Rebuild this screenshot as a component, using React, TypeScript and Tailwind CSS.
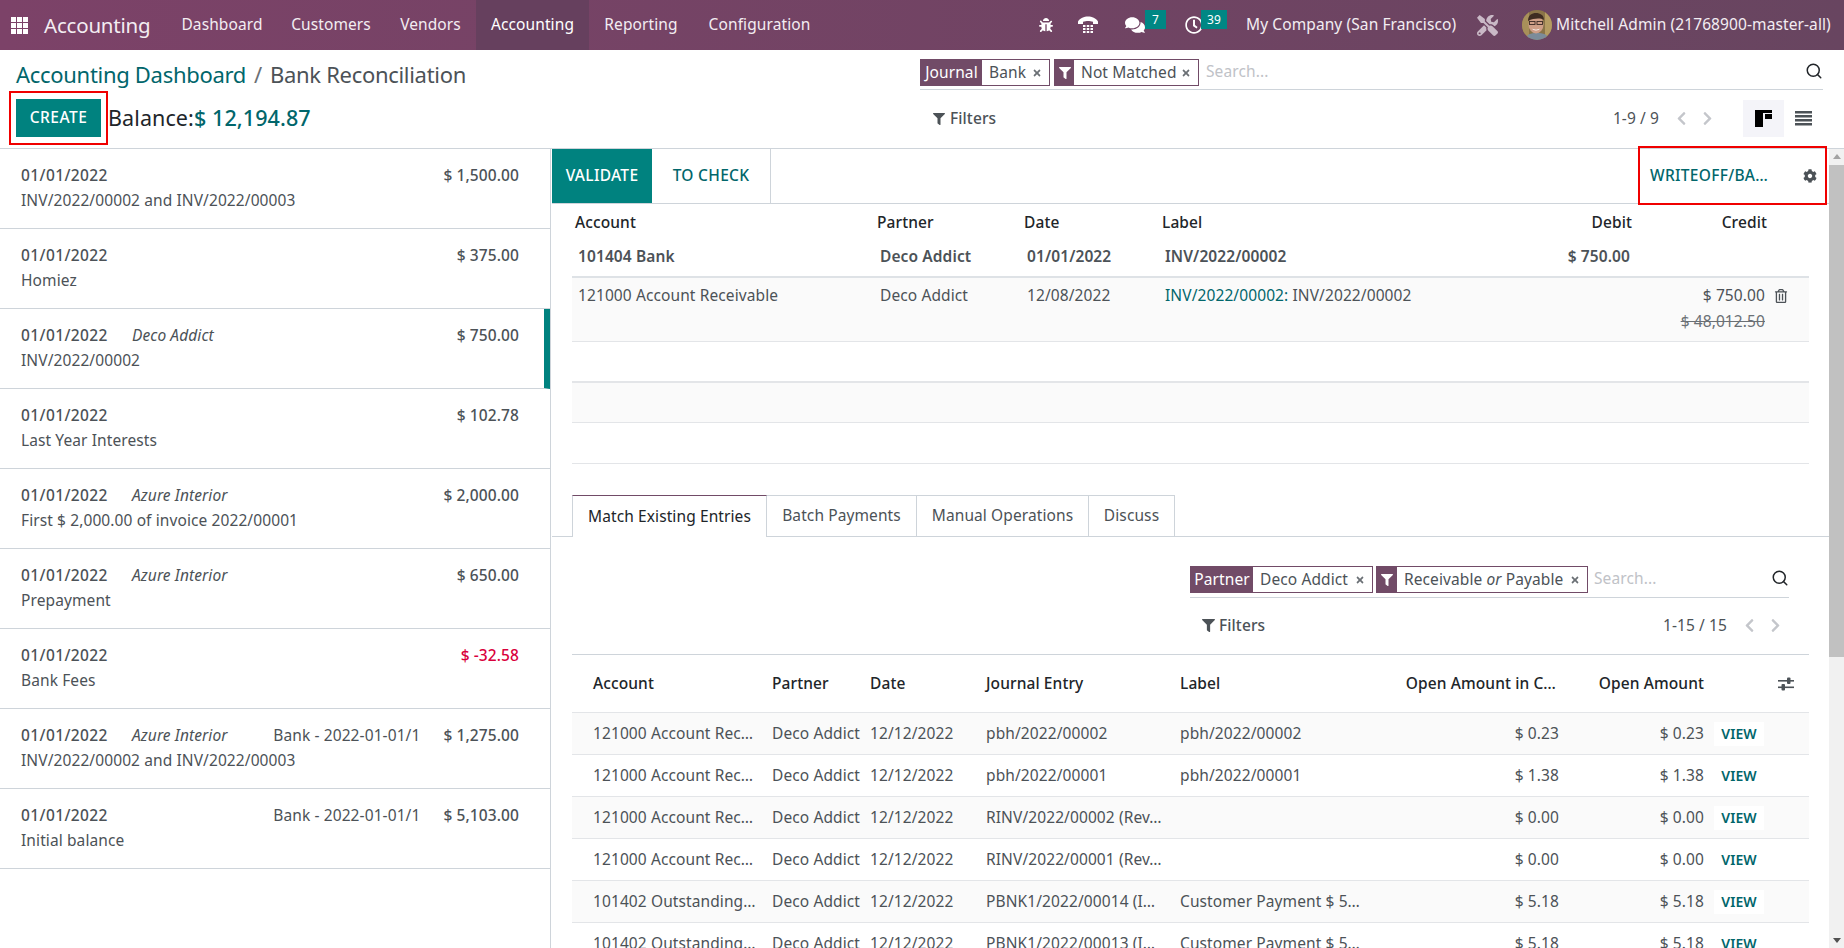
import { FaBug, FaComments, FaRegClock, FaTools, FaFilter, FaCog, FaRegTrashAlt, FaChevronLeft, FaChevronRight, FaTimes } from 'react-icons/fa'
import { FiSearch } from 'react-icons/fi'

const menu = [
  { name: 'Dashboard', width: 'w-[110px]' },
  { name: 'Customers', width: 'w-[108px]' },
  { name: 'Vendors', width: 'w-[91px]' },
  { name: 'Accounting', width: 'w-[113px]' },
  { name: 'Reporting', width: 'w-[104px]' },
  { name: 'Configuration', width: 'w-[133px]' },
]

const statements = [
  { date: '01/01/2022', partner: '', ref: '', amount: '$ 1,500.00', label: 'INV/2022/00002 and INV/2022/00003' },
  { date: '01/01/2022', partner: '', ref: '', amount: '$ 375.00', label: 'Homiez' },
  { date: '01/01/2022', partner: 'Deco Addict', ref: '', amount: '$ 750.00', label: 'INV/2022/00002', active: true },
  { date: '01/01/2022', partner: '', ref: '', amount: '$ 102.78', label: 'Last Year Interests' },
  { date: '01/01/2022', partner: 'Azure Interior', ref: '', amount: '$ 2,000.00', label: 'First $ 2,000.00 of invoice 2022/00001' },
  { date: '01/01/2022', partner: 'Azure Interior', ref: '', amount: '$ 650.00', label: 'Prepayment' },
  { date: '01/01/2022', partner: '', ref: '', amount: '$ -32.58', label: 'Bank Fees', negative: true },
  { date: '01/01/2022', partner: 'Azure Interior', ref: 'Bank - 2022-01-01/1', amount: '$ 1,275.00', label: 'INV/2022/00002 and INV/2022/00003' },
  { date: '01/01/2022', partner: '', ref: 'Bank - 2022-01-01/1', amount: '$ 5,103.00', label: 'Initial balance' },
]

const entries = [
  ['121000 Account Rec…', 'pbh/2022/00002', 'pbh/2022/00002', '$ 0.23'],
  ['121000 Account Rec…', 'pbh/2022/00001', 'pbh/2022/00001', '$ 1.38'],
  ['121000 Account Rec…', 'RINV/2022/00002 (Rev…', '', '$ 0.00'],
  ['121000 Account Rec…', 'RINV/2022/00001 (Rev…', '', '$ 0.00'],
  ['101402 Outstanding…', 'PBNK1/2022/00014 (I…', 'Customer Payment $ 5…', '$ 5.18'],
  ['101402 Outstanding…', 'PBNK1/2022/00013 (I…', 'Customer Payment $ 5…', '$ 5.18'],
]

function Tty() {
  return (
    <svg width="20" height="20" viewBox="0 0 20 20" fill="currentColor">
      <path d="M0 6.500C2 3 6 1.500 10 1.500S18 3 20 6.500V9h-5V6.800C13.500 6.200 11.500 6 10 6s-3.500.2-5 .8V9H0z" />
      <rect x="5" y="10" width="2.500" height="2" /><rect x="8.750" y="10" width="2.500" height="2" /><rect x="12.500" y="10" width="2.500" height="2" />
      <rect x="5" y="13" width="2.500" height="2" /><rect x="8.750" y="13" width="2.500" height="2" /><rect x="12.500" y="13" width="2.500" height="2" />
      <rect x="5" y="16" width="2.500" height="2" /><rect x="8.750" y="16" width="2.500" height="2" /><rect x="12.500" y="16" width="2.500" height="2" />
    </svg>
  )
}

function Avatar() {
  return (
    <svg width="30" height="30" viewBox="0 0 30 30">
      <defs>
        <clipPath id="av"><circle cx="15" cy="15" r="15" /></clipPath>
      </defs>
      <g clipPath="url(#av)">
        <rect width="30" height="30" fill="#8a7448" />
        <rect x="0" y="0" width="7" height="30" fill="#a8905a" />
        <rect x="23" y="0" width="7" height="30" fill="#b59c62" />
        <path d="M3 30c1-6 6-7 12-7s11 1 12 7z" fill="#7c8c9a" />
        <ellipse cx="14" cy="14.500" rx="7.500" ry="9" fill="#cf9f88" />
        <path d="M6 11c0-6 4-8 8-8s8 2 8 7c-3-2-10-2-16 1z" fill="#3e2c22" />
        <rect x="7.500" y="11.500" width="5.500" height="3" fill="none" stroke="#3b2a25" strokeWidth="0.900" />
        <rect x="15" y="11.500" width="5.500" height="3" fill="none" stroke="#3b2a25" strokeWidth="0.900" />
        <path d="M10 18.500c2 1.500 6 1.500 8 0-1 2.500-7 2.500-8 0z" fill="#fff" />
      </g>
    </svg>
  )
}

function Chip({ label, labelWidth, children, className }: { label: React.ReactNode; labelWidth: string; children: React.ReactNode; className: string }) {
  return (
    <div className={`flex h-[27px] border border-[#714b67] bg-white ${className}`}>
      <div className={`flex shrink-0 items-center justify-center bg-[#714b67] text-white ${labelWidth}`}>{label}</div>
      <div className="flex flex-1 items-center justify-between pl-[7px] pr-[7px] whitespace-nowrap text-[#4c5257]">
        <span>{children}</span>
        <FaTimes className="text-[10px] text-[#6b7075]" />
      </div>
    </div>
  )
}

function Pager({ text }: { text: string }) {
  return (
    <div className="flex items-center text-[#4c5257]">
      <span>{text}</span>
      <FaChevronLeft className="ml-[15px] text-[15px] text-[#c4c6cb]" />
      <FaChevronRight className="ml-[11px] text-[15px] text-[#c4c6cb]" />
    </div>
  )
}

export default function App() {
  return (
    <div className="relative flex h-[948px] flex-col overflow-hidden bg-white font-['Noto_Sans',sans-serif] text-[15.5px] tracking-[0.1px] text-[#4c5257]">
      {/* Navbar */}
      <div className="flex h-[50px] shrink-0 items-center bg-[linear-gradient(to_right,#7c4268,#684560)] text-[#f3edf2]">
        <div className="ml-[11px] grid grid-cols-3 gap-[1px]">
          {Array.from({ length: 9 }).map((_, i) => (
            <span key={i} className="h-[5px] w-[5px] bg-white" />
          ))}
        </div>
        <span className="ml-[16px] w-[123px] text-[20.500px] tracking-[-0.2px]">Accounting</span>
        <div className="flex h-full">
          {menu.map((m) => (
            <div key={m.name} className={`flex items-center justify-center whitespace-nowrap ${m.width} ${m.name === 'Accounting' ? 'bg-[#66405e] text-white' : ''}`}>{m.name}</div>
          ))}
        </div>
        <div className="ml-auto flex h-full items-center">
          <FaBug className="text-[14px] text-white" />
          <span className="ml-[25px] text-white"><Tty /></span>
          <div className="relative ml-[27px] text-white">
            <FaComments className="text-[20px]" />
            <span className="absolute left-[20px] top-[-5px] flex h-[19px] w-[21px] items-center justify-center bg-[#008784] text-[12px] text-white">7</span>
          </div>
          <div className="relative ml-[40px] text-white">
            <FaRegClock className="text-[18px]" />
            <span className="absolute left-[16px] top-[-6px] flex h-[19px] w-[26px] items-center justify-center bg-[#008784] text-[12px] text-white">39</span>
          </div>
          <span className="ml-[43px] w-[206px] whitespace-nowrap">My Company (San Francisco)</span>
          <FaTools className="ml-[25px] text-[21px] text-[#c9b9c6]" />
          <span className="ml-[24px]"><Avatar /></span>
          <span className="ml-[4px] mr-[13px] w-[275px] whitespace-nowrap">Mitchell Admin (21768900-master-all)</span>
        </div>
      </div>

      {/* Control panel */}
      <div className="flex h-[99px] shrink-0 border-b border-[#ced4da]">
        <div className="w-[920px] pl-[16px]">
          <div className="pt-[9px] text-[22px] leading-[30px] tracking-[-0.3px]">
            <span className="text-[#01666b]">Accounting Dashboard</span>
            <span className="mx-[8px] text-[#6b7075]">/</span>
            <span className="text-[#4c5257]">Bank Reconciliation</span>
          </div>
          <div className="mt-[10px] flex items-center">
            <div className="flex h-[38px] w-[85px] items-center justify-center bg-[#00827f] font-medium tracking-[0.5px] text-white">CREATE</div>
            <span className="ml-[7px] text-[21.500px] text-[#212529]">Balance:</span>
            <span className="text-[21.500px] font-medium text-[#01666b]">$ 12,194.87</span>
          </div>
        </div>
        <div className="flex-1 pr-[21px]">
          <div className="mt-[9px] flex h-[31px] items-start border-b border-[#ced4da]">
            <Chip label="Journal" labelWidth="w-[61px]" className="w-[130px]">Bank</Chip>
            <Chip label={<FaFilter className="text-[12px]" />} labelWidth="w-[19px]" className="ml-[4px] w-[145px]">Not Matched</Chip>
            <span className="ml-[7px] mt-[1px] text-[#c0c2c7]">Search...</span>
            <FiSearch className="ml-auto mt-[3px] text-[18px] text-[#212529]" />
          </div>
          <div className="mt-[10px] flex h-[37px] items-center">
            <FaFilter className="ml-[13px] text-[12px]" />
            <span className="ml-[5px] font-medium">Filters</span>
            <div className="ml-auto"><Pager text="1-9 / 9" /></div>
            <div className="ml-[28px] flex h-[37px] w-[41px] items-center justify-center bg-[#f4f4f9]">
              <svg width="17" height="17" viewBox="0 0 17 17">
                <path d="M0 0h17v3H8v14H0z" fill="#000" />
                <rect x="10" y="4" width="7" height="5" fill="#000" />
              </svg>
            </div>
            <svg className="ml-[11px] mr-[11px]" width="17" height="15" viewBox="0 0 17 15" fill="#4c5257">
              <rect width="17" height="2.500" /><rect y="4" width="17" height="2.500" /><rect y="8" width="17" height="2.500" /><rect y="12" width="17" height="2.500" />
            </svg>
          </div>
        </div>
      </div>

      <div className="flex min-h-0 flex-1">
        {/* Statement lines */}
        <div className="w-[551px] shrink-0 border-r border-[#ced4da]">
          {statements.map((s, i) => (
            <div key={i} className={`h-[80px] whitespace-nowrap border-b border-[#ced4da] pl-[21px] pt-[15px] ${s.active ? 'border-r-[6px] border-r-[#00827f] pr-[25px]' : 'pr-[31px]'}`}>
              <div className="flex h-[24px] items-center">
                <span className="w-[111px] font-medium tracking-[0.4px]">{s.date}</span>
                <i className="text-[#4c5257]">{s.partner}</i>
                {s.ref && <span className="ml-auto">{s.ref}</span>}
                <span className={`font-medium ${s.ref ? 'ml-[23px]' : 'ml-auto'} ${s.negative ? 'text-[#d9003c]' : ''}`}>{s.amount}</span>
              </div>
              <div className="mt-[1px] flex h-[24px] items-center">{s.label}</div>
            </div>
          ))}
        </div>

        {/* Reconciliation */}
        <div className="ml-[1px] min-w-0 flex-1 overflow-hidden">
          <div className="flex h-[55px] items-stretch border-b border-[#ced4da]">
            <div className="flex w-[100px] items-center justify-center bg-[#00827f] font-medium tracking-[0.3px] text-white">VALIDATE</div>
            <div className="flex w-[119px] items-center justify-center border-r border-[#ced4da] font-medium tracking-[0.3px] text-[#01666b]">TO CHECK</div>
            <div className="ml-auto flex items-center pr-[12px]">
              <span className="w-[122px] whitespace-nowrap font-medium tracking-[0.3px] text-[#01666b]">WRITEOFF/BA…</span>
              <FaCog className="ml-[31px] text-[14px] text-[#4c5257]" />
            </div>
          </div>

          <div className="mx-[20px]">
            <div className="grid h-[38px] grid-cols-[302px_147px_138px_325px_148px_135px_1fr] items-center font-medium text-[#212529]">
              <span className="pl-[3px]">Account</span>
              <span className="pl-[3px]">Partner</span>
              <span className="pl-[3px]">Date</span>
              <span className="pl-[3px]">Label</span>
              <span className="text-right">Debit</span>
              <span className="text-right">Credit</span>
            </div>
            <div className="grid h-[34px] grid-cols-[302px_147px_138px_325px_148px_135px_1fr] items-start pt-[3px] font-semibold">
              <span className="pl-[6px]">101404 Bank</span>
              <span className="pl-[6px]">Deco Addict</span>
              <span className="pl-[6px]">01/01/2022</span>
              <span className="pl-[6px]">INV/2022/00002</span>
              <span className="pr-[2px] text-right">$ 750.00</span>
            </div>
            <div className="grid h-[66px] grid-cols-[302px_147px_138px_325px_148px_135px_1fr] border-b border-t-2 border-[#dee2e6] border-b-[#e3e5e8] bg-[#fafafa] pt-[6px]">
              <span className="pl-[6px]">121000 Account Receivable</span>
              <span className="pl-[6px]">Deco Addict</span>
              <span className="pl-[6px]">12/08/2022</span>
              <span className="col-span-2 pl-[6px]"><span className="text-[#01666b]">INV/2022/00002:</span> INV/2022/00002</span>
              <div className="pr-[2px] text-right">
                <div>$ 750.00</div>
                <div className="mt-[3px] text-[#6b7075] line-through">$ 48,012.50</div>
              </div>
              <FaRegTrashAlt className="ml-[7px] mt-[5px] text-[14px]" />
            </div>
            <div className="h-[39px]" />
            <div className="h-[42px] border-b border-t-2 border-[#e3e5e8] bg-[#fafafa]" />
            <div className="h-[41px] border-b border-[#e3e5e8]" />
          </div>

          {/* Tabs */}
          <div className="mt-[31px] flex h-[42px] items-end border-b border-[#ced4da] pl-[20px]">
            <div className="-mb-px flex h-[42px] w-[195px] items-center justify-center border-x border-t border-[#ced4da] border-t-[#714b67] bg-white text-[#212529]">Match Existing Entries</div>
            <div className="flex h-[41px] w-[150px] items-center justify-center border-r border-t border-[#ced4da]">Batch Payments</div>
            <div className="flex h-[41px] w-[172px] items-center justify-center border-r border-t border-[#ced4da]">Manual Operations</div>
            <div className="flex h-[41px] w-[86px] items-center justify-center border-r border-t border-[#ced4da]">Discuss</div>
          </div>

          {/* Match entries */}
          <div className="ml-[638px] mr-[40px] mt-[29px] flex h-[32px] items-start border-b border-[#ced4da]">
            <Chip label="Partner" labelWidth="w-[62px]" className="w-[183px]">Deco Addict</Chip>
            <Chip label={<FaFilter className="text-[12px]" />} labelWidth="w-[20px]" className="ml-[3px] w-[212px]">Receivable <i>or</i> Payable</Chip>
            <span className="ml-[6px] mt-[1px] text-[#c0c2c7]">Search...</span>
            <FiSearch className="ml-auto mt-[3px] text-[18px] text-[#212529]" />
          </div>
          <div className="ml-[650px] mr-[46px] mt-[10px] flex h-[35px] items-center">
            <FaFilter className="text-[13px]" />
            <span className="ml-[4px] font-medium">Filters</span>
            <div className="ml-auto"><Pager text="1-15 / 15" /></div>
          </div>
          <div className="mx-[20px] mt-[11px] border-t border-[#ced4da]">
            <div className="grid h-[58px] grid-cols-[179px_98px_116px_194px_190px_189px_145px_1fr] items-center border-b border-[#e3e5e8] pl-[21px] font-medium text-[#212529]">
              <span>Account</span>
              <span>Partner</span>
              <span>Date</span>
              <span>Journal Entry</span>
              <span>Label</span>
              <span className="whitespace-nowrap pr-[3px] text-right">Open Amount in C…</span>
              <span className="text-right">Open Amount</span>
              <svg className="ml-[74px]" width="16" height="14" viewBox="0 0 16 14" fill="#4c5257">
                <rect y="3" width="16" height="1.600" />
                <rect x="9" y="0.500" width="3.500" height="6.500" rx="1" />
                <rect y="9.500" width="16" height="1.600" />
                <rect x="3.500" y="7" width="3.500" height="6.500" rx="1" />
              </svg>
            </div>
            {entries.map((e, i) => (
              <div key={i} className={`grid h-[42px] grid-cols-[179px_98px_116px_194px_190px_189px_145px_1fr] items-center whitespace-nowrap border-b border-[#e3e5e8] pl-[21px] ${i % 2 === 0 ? 'bg-[#fafafa]' : ''}`}>
                <span>{e[0]}</span>
                <span>Deco Addict</span>
                <span>12/12/2022</span>
                <span>{e[1]}</span>
                <span>{e[2]}</span>
                <span className="text-right">{e[3]}</span>
                <span className="text-right">{e[3]}</span>
                <span className={`ml-[10px] flex h-[24px] w-[50px] items-center justify-center text-[14px] font-semibold text-[#01666b] ${i % 2 === 0 ? 'bg-white' : ''}`}>VIEW</span>
              </div>
            ))}
          </div>
        </div>

        {/* Scrollbar */}
        <div className="flex w-[15px] shrink-0 flex-col items-center bg-[#f1f1f1]">
          <span className="mt-[5px] h-0 w-0 border-x-[4px] border-b-[5px] border-x-transparent border-b-[#a3a3a3]" />
          <span className="mt-[6px] h-[492px] w-full bg-[#c1c1c1]" />
          <span className="mb-[5px] mt-auto h-0 w-0 border-x-[4px] border-t-[5px] border-x-transparent border-t-[#505050]" />
        </div>
      </div>

      {/* Annotations */}
      <div className="absolute left-[9px] top-[91px] h-[54px] w-[99px] border-2 border-[#f00000]" />
      <div className="absolute left-[1638px] top-[146px] h-[59px] w-[189px] border-2 border-[#f00000]" />
    </div>
  )
}
